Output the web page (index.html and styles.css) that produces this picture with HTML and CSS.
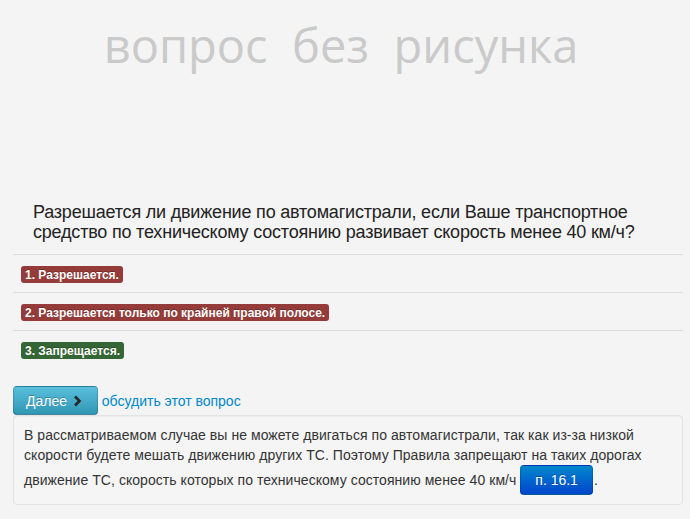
FILE: index.html
```html
<!DOCTYPE html>
<html>
<head>
  <meta charset="UTF-8">
  <title>Вопрос</title>
  <link rel="stylesheet" href="styles.css">
</head>
<body>
  <div class="question-container">
    <div class="picture">
      <div class="no-picture">вопрос&nbsp; без&nbsp; рисунка</div>
    </div>

    <div class="question-text">Разрешается ли движение по автомагистрали, если Ваше транспортное средство по техническому состоянию развивает скорость менее 40 км/ч?</div>

    <div class="answers">
      <div class="answer"><span class="label label-wrong">1. Разрешается.</span></div>
      <div class="answer"><span class="label label-wrong">2. Разрешается только по крайней правой полосе.</span></div>
      <div class="answer"><span class="label label-right">3. Запрещается.</span></div>
    </div>

    <div class="actions">
      <button class="btn btn-info">Далее <span class="icon-chevron"><svg width="14" height="14" viewBox="0 0 14 14"><path d="M4 2.5 L8.5 7 L4 11.5" fill="none" stroke="#262626" stroke-width="2.6"/></svg></span></button>
      <a href="#" class="discuss">обсудить этот вопрос</a>
    </div>

    <div class="well">
      В рассматриваемом случае вы не можете двигаться по автомагистрали, так как из-за низкой скорости будете мешать движению других ТС. Поэтому Правила запрещают на таких дорогах движение ТС, скорость которых по техническому состоянию менее 40 км/ч <button class="btn btn-primary">п. 16.1</button><span class="dot">.</span>
    </div>
  </div>
</body>
</html>
```

FILE: styles.css
```css
body {
  margin: 0;
  padding: 0;
  background-color: #f4f4f4;
  color: #333;
  font-family: "Liberation Sans", Arial, sans-serif;
  font-size: 14px;
  line-height: 20px;
}
.question-container {
  width: 670px;
  margin-left: 13px;
}
.picture {
  height: 190px;
  padding-top: 13px;
  box-sizing: border-box;
  text-align: center;
}
.no-picture {
  font-family: "Open Sans", sans-serif;
  font-size: 47px;
  line-height: normal;
  color: #cacaca;
  margin-left: -14px;
}
.question-text {
  margin-top: 12px;
  padding: 0 20px;
  font-size: 18px;
  line-height: 20px;
  letter-spacing: -0.2px;
  color: #222;
  margin-bottom: 12px;
}
.answers {
  margin-bottom: 18px;
}
.answer {
  border-top: 1px solid #ddd;
  padding: 9px 8px 8px;
  line-height: 20px;
}
.label {
  display: inline-block;
  padding: 2px 4px 1px;
  font-size: 12px;
  font-weight: bold;
  line-height: 14px;
  color: #fff;
  text-shadow: 0 -1px 0 rgba(0, 0, 0, 0.25);
  border-radius: 3px;
}
.label-wrong {
  background-color: #953b39;
}
.label-right {
  background-color: #356635;
}
.btn {
  display: inline-block;
  padding: 4px 12px 3px;
  font-family: "Liberation Sans", Arial, sans-serif;
  font-size: 14px;
  line-height: 20px;
  color: #fff;
  text-shadow: 0 -1px 0 rgba(0, 0, 0, 0.25);
  border: 1px solid rgba(0, 0, 0, 0.15);
  border-bottom-color: rgba(0, 0, 0, 0.3);
  border-radius: 4px;
  cursor: pointer;
  vertical-align: baseline;
}
.btn-info {
  background-image: linear-gradient(to bottom, #5bc0de, #2f96b4);
}
.btn-primary {
  padding: 4px 14px;
  letter-spacing: 0;
  background-image: linear-gradient(to bottom, #0088cc, #0044cc);
}
.dot {
  margin-left: 1px;
}
.icon-chevron {
  display: inline-block;
  width: 14px;
  height: 14px;
  vertical-align: -2px;
}
.icon-chevron svg {
  display: block;
}
.discuss {
  color: #0088cc;
  text-decoration: none;
}
.well {
  padding: 9px 10px;
  letter-spacing: 0.05px;
  background-color: #f5f5f5;
  border: 1px solid #e3e3e3;
  border-radius: 4px;
  box-shadow: inset 0 1px 1px rgba(0, 0, 0, 0.03);
}
```
